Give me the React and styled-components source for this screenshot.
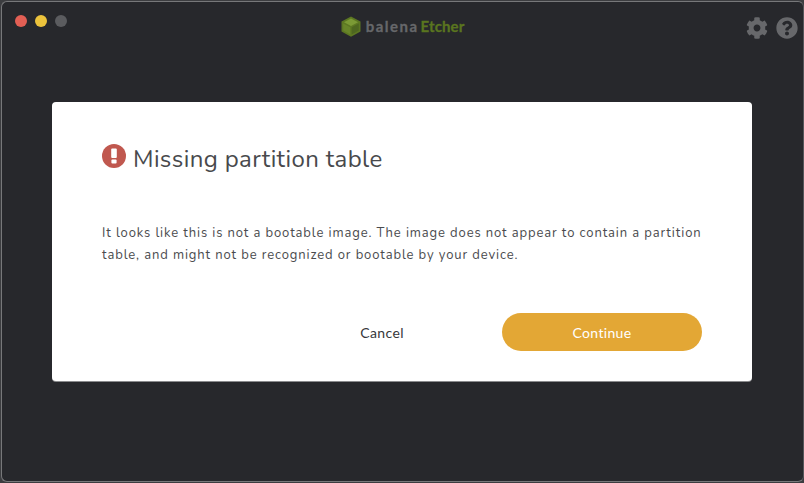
import React from 'react';
import styled, { createGlobalStyle } from 'styled-components';
import { FaCog, FaQuestionCircle } from 'react-icons/fa';

const Global = createGlobalStyle`
  html, body { margin: 0; padding: 0; width: 804px; height: 483px; overflow: hidden; background: #3c3d40; }
  #root { width: 804px; height: 483px; }
  * { box-sizing: border-box; }
`;
const Stage = styled.div`
  width: 804px; height: 483px; padding: 1px 0 1px 1px; display: flex;
`;
const Window = styled.div`
  flex: 1; display: flex; flex-direction: column; background: #27282c;
  border: 1px solid #77787a; border-right-color: #55565a; border-bottom-color: #77787a; border-radius: 6px; overflow: hidden;
`;
const TitleBar = styled.div`
  height: 100px; display: grid; grid-template-columns: 1fr auto 1fr; align-items: start; padding: 0 4px 0 13px; flex: none;
`;
const Lights = styled.div` display: flex; gap: 8px; padding-top: 13px; `;
const Light = styled.span`
  width: 12px; height: 12px; border-radius: 50%; background: ${p => p.$color};
`;
const Brand = styled.div`
  display: flex; align-items: center; gap: 5px; padding-top: 10px; margin-left: -9px;
  font: 700 15px "Lato", sans-serif; height: 38px;
`;
const BrandGray = styled.span` color: #66676a; letter-spacing: 1.5px; -webkit-text-stroke: 0.3px #66676a; `;
const BrandGreen = styled.span` color: #5a751f; margin-left: -3px; letter-spacing: 0.1px; -webkit-text-stroke: 0.3px #5a751f; `;
const Tools = styled.div`
  display: flex; justify-content: flex-end; gap: 6px; padding-top: 14px; color: #67686b; font-size: 22px;
`;
const ToolIcon = styled.span` display: flex; width: 24px; height: 24px; align-items: center; justify-content: center; `;
const Body = styled.div` flex: 1; padding-left: 50px; `;
const Modal = styled.div`
  width: 700px; height: 279px; background: #fff; border-radius: 4px; padding: 41px 50px 30px;
  display: flex; flex-direction: column; box-shadow: 0 1px 0 #8a8b8d;
`;
const Heading = styled.div` display: flex; align-items: center; gap: 7px; height: 32px; `;
const AlertWrap = styled.span` display: flex; margin-top: -6px; `;
const TitleText = styled.h1`
  margin: 0; font: 400 24px/32px "Nunito", "Lato", sans-serif; color: #48494c; letter-spacing: 0.38px;
`;
const Message = styled.p`
  margin: 47px 0 0; font: 400 13px/22px "Nunito", "Lato", sans-serif; color: #4a4b4e; letter-spacing: 0.88px; width: 612px;
`;
const Footer = styled.div` margin-top: auto; display: flex; justify-content: flex-end; align-items: center; `;
const Cancel = styled.button`
  background: none; border: none; padding: 0; margin-right: 98px; cursor: pointer;
  font: 400 14px "Lato", sans-serif; color: #36373a; letter-spacing: 0.4px;
`;
const Primary = styled.button`
  width: 200px; height: 38px; border: none; border-radius: 19px; background: #e3a735; color: #fff; cursor: pointer;
  font: 400 14px "Lato", sans-serif; letter-spacing: 0.35px;
`;

const Cube = () => (
  <svg width="20" height="21" viewBox="0 0 20 21">
    <path d="M10 .5 19.5 5.6v10L10 20.7.5 15.6v-10z" fill="#5c7722" />
    <path d="M10 2.6 17 6.3 10 10 3 6.3z" fill="#7b9a35" />
    <path d="M10.7 11.2 17.8 7.5v7L10.7 18.6z" fill="#4e6720" />
    <path d="M9.3 11.2 2.2 7.5v7L9.3 18.6z" fill="#688529" />
  </svg>
);
const Alert = () => (
  <svg width="24" height="24" viewBox="0 0 24 24">
    <circle cx="12" cy="12" r="12" fill="#c0584f" />
    <rect x="9.2" y="4.6" width="5.6" height="9.4" rx="1" fill="#fff" />
    <rect x="9.4" y="15.4" width="5.2" height="4" rx="1" fill="#fff" />
  </svg>
);

export default function App() {
  return (
    <Stage>
      <Global />
      <Window>
        <TitleBar>
          <Lights>
            <Light $color="#e25f54" />
            <Light $color="#ecc33c" />
            <Light $color="#5b5c5f" />
          </Lights>
          <Brand>
            <Cube />
            <BrandGray>balena</BrandGray>
            <BrandGreen>Etcher</BrandGreen>
          </Brand>
          <Tools>
            <ToolIcon><FaCog /></ToolIcon>
            <ToolIcon><FaQuestionCircle /></ToolIcon>
          </Tools>
        </TitleBar>
        <Body>
          <Modal>
            <Heading>
              <AlertWrap><Alert /></AlertWrap>
              <TitleText>Missing partition table</TitleText>
            </Heading>
            <Message>It looks like this is not a bootable image. The image does not appear to contain a partition table, and might not be recognized or bootable by your device.</Message>
            <Footer>
              <Cancel>Cancel</Cancel>
              <Primary>Continue</Primary>
            </Footer>
          </Modal>
        </Body>
      </Window>
    </Stage>
  );
}
